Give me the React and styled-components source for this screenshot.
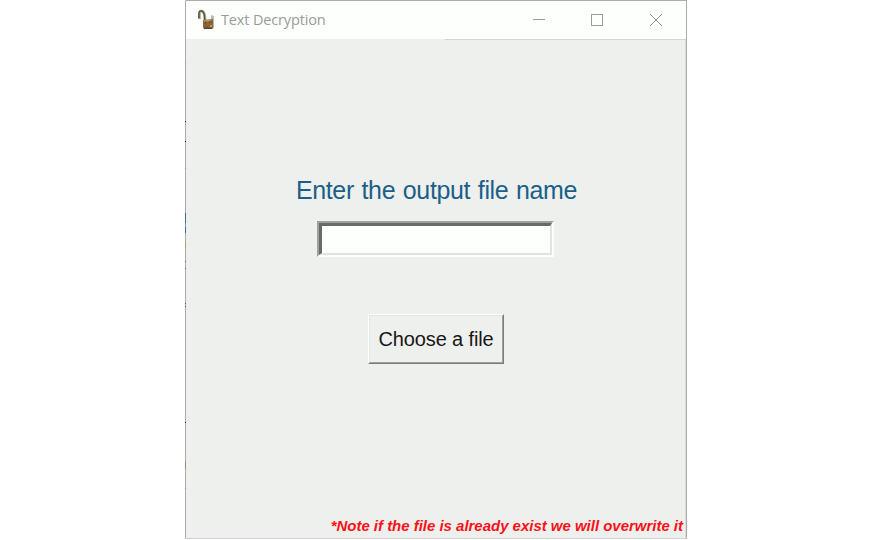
import React from "react";
import styled, { createGlobalStyle } from "styled-components";

const GlobalStyle = createGlobalStyle`
  * { box-sizing: border-box; }
  body { margin: 0; background: #fff; overflow: hidden; font-family: "Liberation Sans", Arial, sans-serif; }
`;

const Desktop = styled.div`
  height: 540px;
  display: flex;
  justify-content: center;
  align-items: flex-start;
`;

const speck = (color, y, height) =>
  `linear-gradient(${color}, ${color}) 0 ${y}px / 1px ${height}px no-repeat border-box`;

const edgeSpecks = [
  speck("#8c8c90", 62, 1),
  speck("#20203c", 121, 1),
  speck("#17173c", 141, 1),
  speck("#ad8868", 168, 1),
  speck("#416d9c", 213, 10),
  speck("#7796b0", 223, 4),
  speck("#416d9c", 227, 6),
  speck("#a0a366", 242, 6),
  speck("#67673b", 261, 1),
  speck("#4c7436", 268, 1),
  speck("#65493b", 303, 1),
  speck("#65493b", 306, 1),
  speck("#202020", 422, 1),
  speck("#b38563", 461, 8),
  speck("#b38563", 488, 1),
].join(", ");

const Window = styled.main`
  width: 502px;
  height: 539px;
  display: flex;
  flex-direction: column;
  background:
    ${edgeSpecks},
    linear-gradient(#aaacaa, #aaacaa) 0 0 / 1px 100% no-repeat border-box,
    #eef0ee;
  border: 1px solid #aaacaa;
  border-left-color: transparent;
  border-bottom-color: #cfd1cf;
`;

const TitleBar = styled.header`
  height: 39px;
  flex: none;
  display: flex;
  align-items: center;
  background:
    linear-gradient(#d4d6d4, #d4d6d4) right bottom / 241px 1px no-repeat,
    linear-gradient(#eef0ee, #eef0ee) left bottom / 260px 1px no-repeat,
    #fdfffd;
  padding-left: 10px;
`;

const Title = styled.h1`
  margin: 0 auto 1px 6px;
  font: 400 14.5px/20px "Open Sans", "Noto Sans", sans-serif;
  letter-spacing: ${(p) => p.$tracking};
  color: #999b99;
  white-space: nowrap;
`;

const WindowControls = styled.div`
  display: flex;
  padding-bottom: 2px;
`;

const WindowButton = styled.button`
  width: ${(p) => p.$width || 58}px;
  height: 36px;
  padding: 0;
  border: 0;
  background: none;
  display: grid;
  place-items: center;
  svg { display: block; }
`;

const Content = styled.form`
  flex: 1;
  display: flex;
  flex-direction: column;
  align-items: center;
  padding-top: 135px;
  border-right: 1px solid #dcdedc;
`;

const Label = styled.label`
  margin-left: 2px;
  font-size: 25px;
  line-height: 30px;
  letter-spacing: ${(p) => p.$tracking};
  word-spacing: 1px;
  color: #1b5f88;
  white-space: nowrap;
`;

const SunkenFrame = styled.div`
  width: 237px;
  height: 36px;
  margin-top: 16px;
  border: 2px solid;
  border-color: #9fa19f #fdfffd #fdfffd #9fa19f;
`;

const Entry = styled.input`
  display: block;
  width: 100%;
  height: 100%;
  padding: 0 3px;
  border: solid;
  border-width: 3px 2px 2px 3px;
  border-color: #686a68 #e1e3e1 #e1e3e1 #686a68;
  border-radius: 0;
  background: #fdfffd;
  outline: none;
  font: 20px "Liberation Sans", sans-serif;
`;

const RaisedFrame = styled.div`
  width: 136px;
  height: 50px;
  margin: 57px 0 0 1px;
  border: 1px solid;
  border-color: #fdfffd #7b7d7b #7b7d7b #fdfffd;
`;

const ChooseButton = styled.button`
  width: 100%;
  height: 100%;
  padding: 0;
  border: 1px solid;
  border-color: #e3e5e3 #9fa19f #9fa19f #e3e5e3;
  background: #eef0ee;
  color: #1a1616;
  font: 20px/24px "Liberation Sans", sans-serif;
  letter-spacing: ${(p) => p.$tracking};
  white-space: nowrap;
`;

const Note = styled.p`
  align-self: flex-end;
  margin: auto 2px 3px 0;
  font: italic bold 15px/18px "Liberation Sans", sans-serif;
  letter-spacing: ${(p) => p.$tracking};
  color: #fb1018;
  white-space: nowrap;
`;

function PadlockIcon() {
  return (
    <svg width="19" height="23" viewBox="0 0 19 23" aria-hidden="true">
      <path d="M3.5 10V4.5C3.5 2 5 1.7 6.5 2.5C8.6 3.6 9 6 9 11" fill="none" stroke="#b9b6a4" strokeWidth="3" />
      <path d="M3 9.5V4.5C3 2 4.4 1.5 6.2 2.2C8 3 8.7 5 8.7 11" fill="none" stroke="#57523f" strokeWidth="1.5" />
      <path d="M15 6l3 1v12l-3 1z" fill="#b9bbb7" />
      <path d="M7 11l10-1v9.5L9 20l-2-1z" fill="#94623a" />
      <path d="M7.5 11h8v1.5h-8z" fill="#b49a50" />
      <path d="M8 13h3v2H8zM13 12h3v2h-3zM10 17h2v1h-2z" fill="#5b6837" />
      <path d="M10 15h4v2h-4z" fill="#a65336" />
      <path d="M8 18.500h8V20H8z" fill="#57452f" />
      <path d="M14 16h2v2h-2z" fill="#c59b5d" />
    </svg>
  );
}

export default function App() {
  return (
    <>
      <GlobalStyle />
      <Desktop>
        <Window>
          <TitleBar>
            <PadlockIcon />
            <Title $tracking="-0.15px">Text Decryption</Title>
            <WindowControls>
              <WindowButton aria-label="Minimize">
                <svg width="12" height="12"><path d="M0 5.5h12" stroke="#999b99" /></svg>
              </WindowButton>
              <WindowButton aria-label="Maximize">
                <svg width="12" height="12"><rect x=".5" y=".5" width="11" height="11" fill="none" stroke="#999b99" /></svg>
              </WindowButton>
              <WindowButton aria-label="Close" $width={60}>
                <svg width="12" height="12"><path d="M0 0l12 12M12 0L0 12" stroke="#8d8f8d" /></svg>
              </WindowButton>
            </WindowControls>
          </TitleBar>
          <Content onSubmit={(e) => e.preventDefault()}>
            <Label htmlFor="output" $tracking="-0.35px">Enter the output file name</Label>
            <SunkenFrame><Entry id="output" /></SunkenFrame>
            <RaisedFrame><ChooseButton type="button" $tracking="-0.13px">Choose a file</ChooseButton></RaisedFrame>
            <Note $tracking="-0.02px">*Note if the file is already exist we will overwrite it</Note>
          </Content>
        </Window>
      </Desktop>
    </>
  );
}
